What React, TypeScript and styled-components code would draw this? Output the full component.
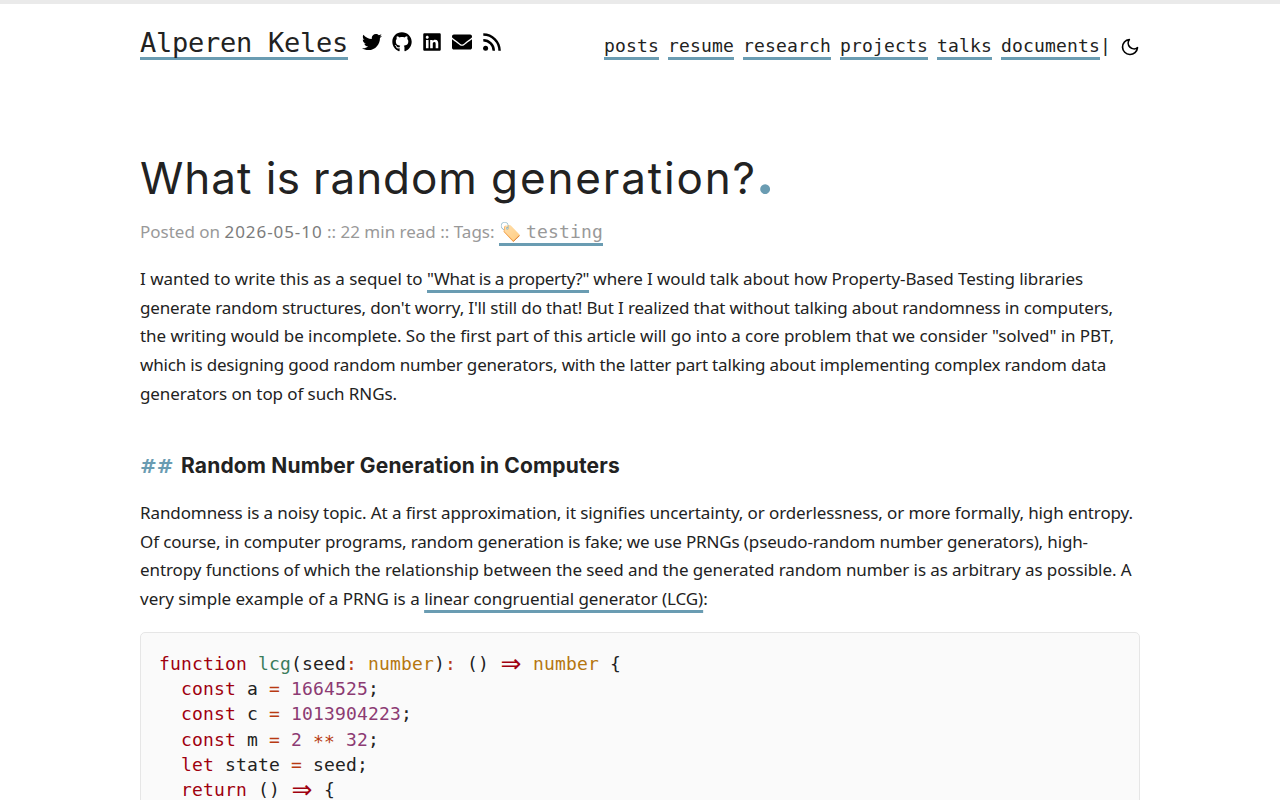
import React from "react";
import { FaTwitter, FaGithub, FaLinkedin, FaEnvelope } from "react-icons/fa";
import { FiMoon } from "react-icons/fi";
import styled, { createGlobalStyle } from "styled-components";

const sans = `"Noto Sans", "Open Sans", sans-serif`;
const mono = `"DejaVu Sans Mono", "Liberation Mono", monospace`;
const accent = "#6a9cb2";

const GlobalStyle = createGlobalStyle`
  body {
    margin: 0;
    height: 100vh;
    overflow: hidden;
    background: #ffffff;
    border-top: 4px solid #eaeaea;
    box-sizing: border-box;
    color: #222222;
    font-family: ${sans};
    font-size: 17px;
    line-height: 28.8px;
  }
`;

const Page = styled.div`
  width: 1000px;
  margin: 0 auto;
`;

const Header = styled.header`
  display: flex;
  align-items: baseline;
  justify-content: space-between;
  height: 123px;
  padding-top: 23px;
  font-family: ${mono};
  white-space: nowrap;
`;

const Brand = styled.div`
  display: flex;
  align-items: baseline;
  gap: 14px;
`;

const Link = styled.a`
  color: inherit;
  text-decoration: underline 3px ${accent};
  text-decoration-skip-ink: none;
  text-underline-offset: 5px;
`;

const SiteName = styled(Link)`
  font-size: 27px;
  line-height: 32px;
  letter-spacing: -0.255px;
`;

const Socials = styled.div`
  display: flex;
  align-items: center;
  align-self: flex-start;
  gap: 10px;
  height: 30px;
  color: #000000;

  svg {
    display: block;
    width: 20px;
    height: 20px;
  }
`;

const Nav = styled.nav`
  display: flex;
  align-items: baseline;
  gap: 9px;
  font-size: 18px;
  letter-spacing: 0.163px;
`;

const NavEnd = styled.span`
  display: flex;
  align-items: baseline;
`;

const ThemeToggle = styled.span`
  display: flex;
  align-self: center;
  margin-left: 9px;
  padding-top: 2px;
  color: #000000;
`;

const Title = styled.h1`
  margin: 0;
  font-family: Inter, sans-serif;
  font-size: 44px;
  font-weight: 400;
  line-height: 56px;
  white-space: pre;
`;

const Track = styled.span<{ $by: number }>`
  letter-spacing: ${(props) => props.$by}px;
`;

const TitleDot = styled.span`
  margin-left: 1px;
  color: ${accent};
  font-family: Lato, sans-serif;
  font-size: 60px;
  font-weight: 900;
  line-height: 0;
`;

const Meta = styled.div`
  margin-top: 12px;
  color: #999999;
  white-space: pre;
`;

const PostDate = styled.time`
  color: #7c7c7c;
  letter-spacing: 0.926px;
`;

const Tag = styled.a`
  display: inline-block;
  height: 23px;
  border-bottom: 3px solid ${accent};
  font-family: ${mono};
  font-size: 18px;
  line-height: 24px;
  letter-spacing: 0.163px;
`;

const Emoji = styled.span`
  display: inline-block;
  width: 27px;
  color: #222222;
  letter-spacing: 0;
`;

const Paragraph = styled.p`
  margin: 18px 0 0;
`;

const Line = styled.span<{ $track?: number }>`
  display: block;
  letter-spacing: ${(props) => props.$track ?? 0}px;
  white-space: pre;
`;

const Heading = styled.h2`
  margin: 42px 0 0;
  font-family: Inter, sans-serif;
  font-size: 21px;
  font-weight: 700;
  line-height: 30px;
  letter-spacing: 0.15px;
  white-space: pre;
`;

const Hashes = styled.span`
  display: inline-block;
  width: 41px;
  color: ${accent};
  font-family: "DejaVu Sans", sans-serif;
  font-size: 20px;
  line-height: 20px;
  letter-spacing: 0;
`;

const CodeBlock = styled.pre`
  margin: 18px 0 0;
  padding: 18px;
  border: 1px solid #e6e6e6;
  border-radius: 5px;
  background: #fafafa;
  font-family: ${mono};
  font-size: 18px;
  line-height: 25.2px;
  letter-spacing: 0.163px;
`;

const Keyword = styled.span`
  color: #9f000f;
`;

const FnName = styled.span`
  color: #3b7c5b;
`;

const Operator = styled.span`
  color: #b83a12;
`;

const TypeName = styled.span`
  color: #b5760f;
`;

const Num = styled.span`
  color: #8c3b73;
`;

const Stars = styled(Operator)`
  line-height: 0;
  vertical-align: -2px;
`;

// two cells wide, like the ligature for =>
const ArrowGlyph = styled(Keyword)`
  display: inline-block;
  width: 22px;
  font-family: "DejaVu Sans", sans-serif;
  font-size: 25px;
  line-height: 0;
  letter-spacing: 0;
  text-align: center;
  vertical-align: -2px;
`;

const Arrow = () => <ArrowGlyph>⇒</ArrowGlyph>;

const RssIcon = () => (
  <svg viewBox="0 0 20 20" fill="none" stroke="currentColor" strokeWidth="2.5">
    <path d="M1.3 2.5A16.3 16.3 0 0 1 17.6 18.8" />
    <path d="M1.3 8.3A10.5 10.5 0 0 1 11.8 18.8" />
    <circle cx="3.6" cy="16.3" r="2.5" fill="currentColor" stroke="none" />
  </svg>
);

const links = ["posts", "resume", "research", "projects", "talks"];

const App: React.FC = () => {
  return (
    <>
      <GlobalStyle />
      <Page>
        <Header>
          <Brand>
            <SiteName>Alperen Keles</SiteName>
            <Socials>
              <FaTwitter />
              <FaGithub />
              <FaLinkedin />
              <FaEnvelope />
              <RssIcon />
            </Socials>
          </Brand>
          <Nav>
            {links.map((name) => (
              <Link key={name}>{name}</Link>
            ))}
            <NavEnd>
              <Link>documents</Link>|
              <ThemeToggle>
                <FiMoon size={20} />
              </ThemeToggle>
            </NavEnd>
          </Nav>
        </Header>

        <main>
          <Title>
            <Track $by={1}>What </Track>
            <Track $by={0.3}>is </Track>
            <Track $by={0.93}>random </Track>
            <Track $by={1.85}>generation?</Track>
            <TitleDot>.</TitleDot>
          </Title>
          <Meta>
            Posted on <PostDate>2026-05-10</PostDate> :: 22 min read :: Tags:{" "}
            <Tag>
              <Emoji>🏷️</Emoji>testing
            </Tag>
          </Meta>

          <Paragraph>
            <Line>
              <Track $by={-0.014}>I wanted to write this as a sequel to </Track>
              <Link>
                <Track $by={-0.31}>"What is a property?"</Track>
              </Link>
              <Track $by={-0.09}> where I would talk about how Property-Based Testing libraries</Track>
            </Line>
            <Line $track={-0.148}>
              generate random structures, don't worry, I'll still do that! But I realized that without talking about randomness in computers,
            </Line>
            <Line $track={-0.052}>
              the writing would be incomplete. So the first part of this article will go into a core problem that we consider "solved" in PBT,
            </Line>
            <Line $track={-0.179}>
              which is designing good random number generators, with the latter part talking about implementing complex random data
            </Line>
            <Line $track={-0.088}>generators on top of such RNGs.</Line>
          </Paragraph>

          <Heading>
            <Hashes>## </Hashes>Random Number Generation in Computers
          </Heading>

          <Paragraph>
            <Line $track={-0.103}>
              Randomness is a noisy topic. At a first approximation, it signifies uncertainty, or orderlessness, or more formally, high entropy.
            </Line>
            <Line $track={-0.135}>
              Of course, in computer programs, random generation is fake; we use PRNGs (pseudo-random number generators), high-
            </Line>
            <Line $track={-0.095}>
              entropy functions of which the relationship between the seed and the generated random number is as arbitrary as possible. A
            </Line>
            <Line>
              very simple example of a PRNG is a{" "}
              <Link>
                <Track $by={-0.071}>linear congruential generator (LCG)</Track>
              </Link>
              :
            </Line>
          </Paragraph>

          <CodeBlock>
            <Keyword>function</Keyword> <FnName>lcg</FnName>(seed<Operator>:</Operator> <TypeName>number</TypeName>)<Operator>:</Operator> () <Arrow /> <TypeName>number</TypeName> {"{\n"}
            {"  "}<Keyword>const</Keyword> a <Operator>=</Operator> <Num>1664525</Num>{";\n"}
            {"  "}<Keyword>const</Keyword> c <Operator>=</Operator> <Num>1013904223</Num>{";\n"}
            {"  "}<Keyword>const</Keyword> m <Operator>=</Operator> <Num>2</Num> <Stars>**</Stars> <Num>32</Num>{";\n"}
            {"  "}<Keyword>let</Keyword> state <Operator>=</Operator> seed{";\n"}
            {"  "}<Keyword>return</Keyword> () <Arrow /> {"{"}
          </CodeBlock>
        </main>
      </Page>
    </>
  );
};

export default App;
